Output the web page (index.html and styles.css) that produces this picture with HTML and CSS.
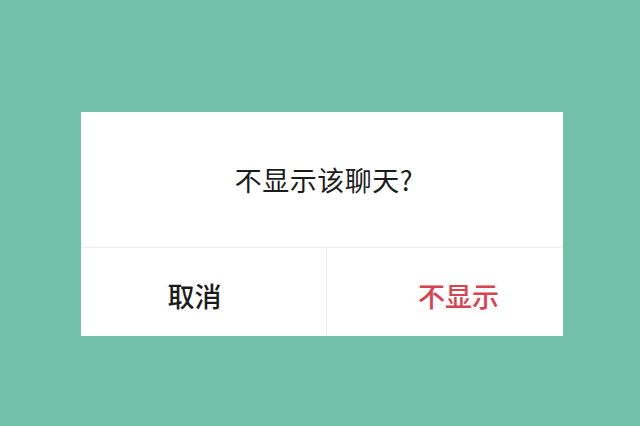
FILE: index.html
```html
<!DOCTYPE html>
<html lang="zh">
<head>
<meta charset="utf-8">
<link rel="stylesheet" href="styles.css">
</head>
<body>
<div class="stage">
  <div class="dialog">
    <div class="dialog-body">不显示该聊天?</div>
    <div class="dialog-actions">
      <div class="btn btn-cancel">取消</div>
      <div class="btn btn-confirm">不显示</div>
    </div>
  </div>
</div>
</body>
</html>
```

FILE: styles.css
```css
html, body {
  margin: 0;
  padding: 0;
  width: 640px;
  height: 426px;
  background: #73c1aa;
  overflow: hidden;
}
.stage {
  padding: 112px 0 0 81px;
}
.dialog {
  width: 482px;
  height: 224px;
  background: #ffffff;
  display: flex;
  flex-direction: column;
  font-family: "Noto Sans CJK SC", "Noto Sans", sans-serif;
}
.dialog-body {
  height: 136px;
  display: flex;
  align-items: center;
  justify-content: center;
  font-size: 27px;
  letter-spacing: 0.5px;
  color: #1c1c1c;
  padding-left: 4px;
  padding-bottom: 1px;
  box-sizing: border-box;
  border-bottom: 1px solid #ededed;
}
.dialog-actions {
  flex: 1;
  display: flex;
}
.btn {
  display: flex;
  align-items: center;
  justify-content: center;
  font-size: 27px;
  font-weight: 500;
  padding-top: 6px;
}
.btn-cancel {
  width: 246px;
  box-sizing: border-box;
  border-right: 1px solid #ededed;
  color: #1c1c1c;
  padding-right: 18px;
}
.btn-confirm {
  flex: 1;
  color: #d8434f;
  padding-left: 27px;
}
```
